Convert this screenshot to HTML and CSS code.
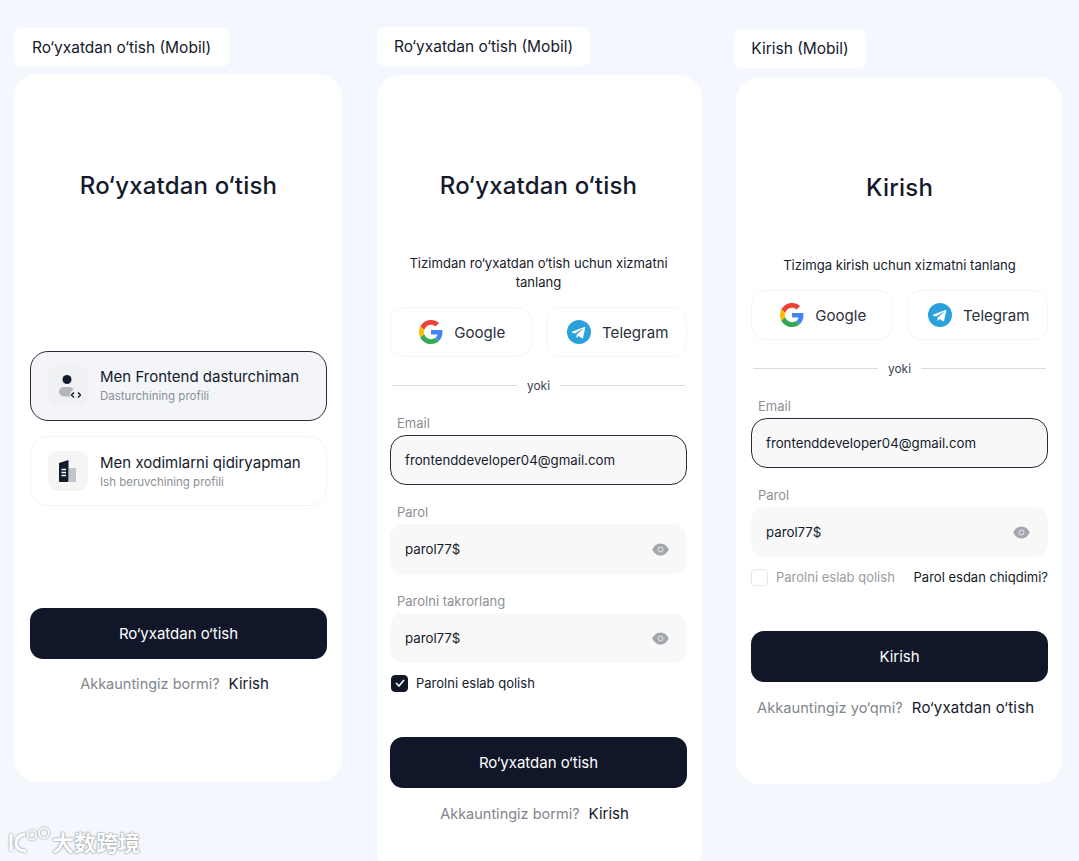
FILE: index.html
```html
<!DOCTYPE html>
<html lang="uz">
<head>
<meta charset="utf-8">
<title>Ro‘yxatdan o‘tish</title>
<link rel="stylesheet" href="styles.css">
</head>
<body>
<svg class="sprites" width="0" height="0" aria-hidden="true">
  <symbol id="google" viewBox="0 0 48 48">
    <path fill="#EA4335" d="M24 9.5c3.5 0 6.700 1.200 9.200 3.600l6.900-6.900C35.900 2.400 30.500 0 24 0 14.600 0 6.500 5.400 2.600 13.200l8 6.200C12.500 13.700 17.800 9.500 24 9.500z"/>
    <path fill="#4285F4" d="M46.980 24.550c0-1.570-.15-3.090-.38-4.550H24v9.020h12.940c-.58 2.960-2.260 5.480-4.780 7.180l7.730 6c4.510-4.180 7.090-10.360 7.090-17.650z"/>
    <path fill="#FBBC05" d="M10.530 28.590c-.48-1.450-.76-2.990-.76-4.590s.27-3.140.76-4.590l-7.980-6.190C.92 16.460 0 20.120 0 24c0 3.880.92 7.540 2.560 10.780l7.970-6.190z"/>
    <path fill="#34A853" d="M24 48c6.480 0 11.930-2.130 15.890-5.810l-7.730-6c-2.150 1.450-4.920 2.300-8.160 2.300-6.260 0-11.570-4.220-13.470-9.910l-7.980 6.190C6.510 42.620 14.620 48 24 48z"/>
  </symbol>
  <symbol id="telegram" viewBox="0 0 24 24">
    <circle cx="12" cy="12" r="12" fill="#2AA1DA"/>
    <path fill="#fff" d="M5 11.800l12.300-4.800c.6-.2 1.100.100.900 1l-2.100 9.800c-.1.700-.6.900-1.200.5l-3.200-2.400-1.600 1.500c-.2.200-.3.300-.6.300l.2-3.200 5.900-5.300c.3-.2-.1-.4-.4-.2l-7.300 4.600-3.100-1c-.7-.2-.7-.6.2-.8z"/>
  </symbol>
  <symbol id="eye" viewBox="0 0 24 24">
    <path fill="#A3A6AC" d="M12 3.500c5.500 0 9.500 4 11.500 8.500-2 4.500-6 8.500-11.500 8.500S2.500 16.500.5 12C2.500 7.500 6.500 3.500 12 3.500z"/>
    <circle cx="12" cy="12" r="4.200" fill="#D5D6D9"/>
    <circle cx="12" cy="12" r="2.300" fill="#A3A6AC"/>
  </symbol>
</svg>

<main class="board">
  <section class="screen screen-a">
    <div class="tab tab-a">Ro‘yxatdan o‘tish (Mobil)</div>
    <div class="card card-a">
      <h1 class="title title-a">Ro‘yxatdan o‘tish</h1>
      <div class="option option-active">
        <span class="option-icon">
          <svg width="26" height="28" viewBox="0 0 26 28">
            <circle cx="12" cy="8.500" r="4.500" fill="#141B2E"/>
            <rect x="4" y="16" width="15" height="9.500" rx="4.700" fill="#B4B6BA"/>
            <circle cx="21" cy="24" r="6" fill="#F0F1F3"/>
            <path d="M19 21.500l-2.500 2.500 2.500 2.500M23 21.500l2.500 2.500-2.500 2.500" fill="none" stroke="#141B2E" stroke-width="1.500"/>
          </svg>
        </span>
        <span class="option-text">
          <span class="option-name">Men Frontend dasturchiman</span>
          <span class="option-sub">Dasturchining profili</span>
        </span>
      </div>
      <div class="option option-second">
        <span class="option-icon">
          <svg width="24" height="26" viewBox="0 0 24 26">
            <path d="M13 10h6a1 1 0 011 1v13h-7z" fill="#C2C4C8"/>
            <path d="M3 5L12.500 2v21a1 1 0 01-1 1H4a1 1 0 01-1-1z" fill="#141B2E"/>
            <path d="M5.500 11.500h4.500M5.500 14.500h4.500M5.500 17.500h4.500" stroke="#fff" stroke-width="1.300"/>
          </svg>
        </span>
        <span class="option-text">
          <span class="option-name">Men xodimlarni qidiryapman</span>
          <span class="option-sub">Ish beruvchining profili</span>
        </span>
      </div>
      <button class="primary primary-a">Ro‘yxatdan o‘tish</button>
      <p class="foot foot-shift"><span class="muted">Akkauntingiz bormi?</span><a class="link">Kirish</a></p>
    </div>
  </section>

  <section class="screen screen-b">
    <div class="tab tab-b">Ro‘yxatdan o‘tish (Mobil)</div>
    <div class="card card-b">
      <h1 class="title title-b">Ro‘yxatdan o‘tish</h1>
      <p class="lead lead-b">Tizimdan ro‘yxatdan o‘tish uchun xizmatni tanlang</p>
      <div class="socials">
        <div class="social"><svg class="g-icon"><use href="#google"/></svg>Google</div>
        <div class="social"><svg class="t-icon"><use href="#telegram"/></svg>Telegram</div>
      </div>
      <div class="divider"><span>yoki</span></div>
      <label class="label">Email</label>
      <div class="field field-focus">frontenddeveloper04@gmail.com</div>
      <label class="label">Parol</label>
      <div class="field">parol77$<svg class="eye"><use href="#eye"/></svg></div>
      <label class="label">Parolni takrorlang</label>
      <div class="field">parol77$<svg class="eye"><use href="#eye"/></svg></div>
      <div class="check-row">
        <span class="check check-on">
          <svg width="10" height="8" viewBox="0 0 10 8"><path d="M1 4l3 3 5-6" fill="none" stroke="#fff" stroke-width="1.600"/></svg>
        </span>
        <span class="check-label">Parolni eslab qolish</span>
      </div>
      <button class="primary primary-b">Ro‘yxatdan o‘tish</button>
      <p class="foot foot-low foot-shift"><span class="muted">Akkauntingiz bormi?</span><a class="link">Kirish</a></p>
    </div>
  </section>

  <section class="screen screen-c">
    <div class="tab tab-c">Kirish (Mobil)</div>
    <div class="card card-c">
      <h1 class="title title-c">Kirish</h1>
      <p class="lead lead-c">Tizimga kirish uchun xizmatni tanlang</p>
      <div class="socials">
        <div class="social"><svg class="g-icon"><use href="#google"/></svg>Google</div>
        <div class="social"><svg class="t-icon"><use href="#telegram"/></svg>Telegram</div>
      </div>
      <div class="divider"><span>yoki</span></div>
      <label class="label">Email</label>
      <div class="field field-focus">frontenddeveloper04@gmail.com</div>
      <label class="label">Parol</label>
      <div class="field">parol77$<svg class="eye"><use href="#eye"/></svg></div>
      <div class="check-row check-row-c">
        <span class="check"></span>
        <span class="check-label check-label-muted">Parolni eslab qolish</span>
        <a class="forgot">Parol esdan chiqdimi?</a>
      </div>
      <button class="primary primary-c">Kirish</button>
      <p class="foot foot-low foot-c"><span class="muted">Akkauntingiz yo‘qmi?</span><a class="link">Ro‘yxatdan o‘tish</a></p>
    </div>
  </section>
</main>

<div class="watermark">
  <svg width="44" height="30" viewBox="0 0 44 30">
    <g fill="none" stroke="#fff" stroke-width="3">
      <path d="M3 8v17M17 8c-5 1-9 4-9 9s4 8 10 8"/>
      <circle cx="24" cy="9" r="4.500" stroke-width="1.600"/>
      <circle cx="36" cy="7" r="5" stroke-width="1.600"/>
    </g>
  </svg>
  <span>大数跨境</span>
</div>
</body>
</html>
```
FILE: styles.css
```css
* { box-sizing: border-box; }
html, body { margin: 0; height: 861px; overflow: hidden; }
body {
  background: #f4f8fe;
  font-family: "Inter", "Noto Sans", sans-serif;
  color: #141a2b;
  position: relative;
}
.sprites { position: absolute; }
.board { display: flex; padding-left: 14px; height: 861px; overflow: hidden; }
.screen { display: flex; flex-direction: column; flex: none; }
.screen-a { width: 328px; margin-right: 35px; padding-top: 28px; }
.screen-b { width: 325px; margin-right: 34px; padding-top: 27px; }
.screen-c { width: 326px; padding-top: 29px; }

.tab {
  height: 39px;
  flex: none;
  display: flex;
  align-items: center;
  justify-content: center;
  background: #fff;
  border-radius: 8px;
  font-size: 15.500px;
  align-self: flex-start;
}
.tab-a { width: 215px; margin-bottom: 7px; }
.tab-b { width: 213px; margin-bottom: 9px; }
.tab-c { width: 132px; margin-bottom: 9px; margin-left: -2px; }

.card {
  background: #fff;
  border-radius: 24px;
  flex: none;
  display: flex;
  flex-direction: column;
}
.card-a { height: 708px; padding: 0 15px 0 16px; }
.card-b { height: 800px; padding: 0 15px 0 13px; }
.card-c { height: 707px; padding: 0 14px 0 15px; }

.title {
  margin: 0;
  font-family: "Inter", sans-serif;
  font-size: 24px;
  font-weight: 500;
  line-height: 30px;
  text-align: center;
  letter-spacing: .2px;
}
.title-a { margin-top: 97px; }
.title-b { margin-top: 96px; }
.title-c { margin-top: 96px; }

.option {
  height: 70px;
  display: flex;
  align-items: center;
  gap: 12px;
  padding-left: 17px;
  border-radius: 18px;
  border: 1px solid #f4f5f7;
}
.option-active {
  background: #f3f5f9;
  border-color: #252b3a;
  margin-top: 150px;
  padding-bottom: 2px;
}
.option-second { margin-top: 15px; }
.option-icon {
  width: 40px;
  height: 40px;
  display: flex;
  align-items: center;
  justify-content: center;
  background: #f0f1f3;
  border-radius: 10px;
}
.option-second .option-icon { background: #f5f5f6; }
.option-text { display: flex; flex-direction: column; gap: 2px; }
.option-name { font-size: 15px; line-height: 20px; }
.option-sub { font-size: 11.500px; line-height: 15px; color: #8b8f97; }

.primary {
  display: block;
  width: 100%;
  height: 51px;
  flex: none;
  background: #111729;
  color: #fff;
  border: 0;
  border-radius: 13px;
  font-family: inherit;
  font-size: 15px;
  font-weight: 400;
}
.primary-a { margin-top: 102px; }
.primary-b { margin-top: 45px; }
.primary-c { margin-top: 45px; }

.foot {
  margin: 15px 0 0;
  display: flex;
  justify-content: center;
  gap: 9px;
  font-size: 14.500px;
  line-height: 20px;
}
.foot-low { margin-top: 16px; }
.foot-shift { padding-right: 8px; }
.foot-c { justify-content: flex-start; padding-left: 6px; font-size: 14.700px; }
.muted { color: #82868e; }
.link { color: #141a2b; font-size: 15px; }
.foot-c .link { letter-spacing: .2px; }

.lead {
  margin: 0;
  font-size: 13.100px;
  line-height: 19px;
  text-align: center;
}
.lead-b { margin-top: 53px; padding: 0 14px; }
.lead-c { margin-top: 53px; }

.socials { display: flex; gap: 14px; margin-top: 15px; }
.social {
  flex: 1;
  height: 50px;
  display: flex;
  align-items: center;
  justify-content: center;
  gap: 11px;
  padding-left: 3px;
  border: 1px solid #f4f5f7;
  border-radius: 14px;
  font-size: 15.100px;
  color: #2a2f3c;
}
.g-icon, .t-icon { width: 24px; height: 24px; }

.divider {
  display: flex;
  align-items: center;
  gap: 10px;
  margin: 19px 2px 0;
  height: 19px;
  font-size: 12px;
  color: #3d424e;
}
.divider::before, .divider::after { content: ""; flex: 1; height: 1px; background: #d9dadd; }

.label {
  display: block;
  margin: 18px 0 0 7px;
  font-size: 13px;
  line-height: 19px;
  color: #8b8f97;
}
.divider + .label { margin-top: 19px; }
.field {
  height: 50px;
  margin-top: 2px;
  display: flex;
  align-items: center;
  justify-content: space-between;
  padding: 0 18px 0 15px;
  background: #f8f8f9;
  border-radius: 14px;
  font-size: 13.250px;
}
.field-focus { border: 1px solid #262c3b; border-radius: 16px; padding-left: 14px; }
.eye { width: 17px; height: 17px; }

.check-row {
  display: flex;
  align-items: center;
  gap: 8px;
  margin-top: 11px;
  height: 18px;
  padding-left: 1px;
  font-size: 13px;
}
.check-row-c { margin-top: 11px; padding-left: 0; }
.check {
  width: 17px;
  height: 17px;
  flex: none;
  display: flex;
  align-items: center;
  justify-content: center;
  border-radius: 4px;
  border: 1px solid #e6e7e9;
}
.check-on { background: #111729; border-color: #111729; }
.check-label-muted { color: #9a9da4; }
.forgot { margin-left: auto; color: #141a2b; }

.watermark {
  position: absolute;
  left: 8px;
  top: 826px;
  display: flex;
  align-items: center;
  color: #fff;
  font-family: "Noto Sans CJK SC", sans-serif;
  font-size: 22px;
  font-weight: 700;
  line-height: 30px;
  text-shadow: 0 0 2px #7f8388, 0 0 1px #7f8388;
}
.watermark svg { filter: drop-shadow(0 0 1px #7f8388); }
```
